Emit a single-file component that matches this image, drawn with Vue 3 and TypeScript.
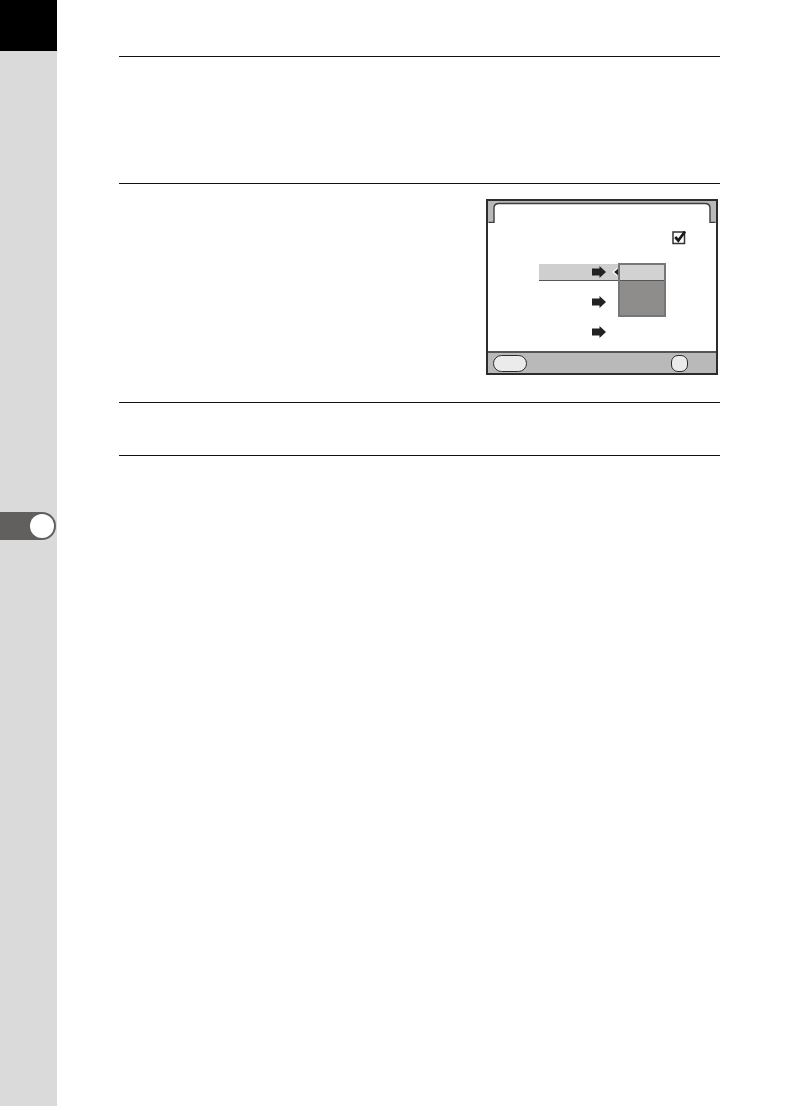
<script setup lang="ts">
const rows = [
  { id: 1, active: true },
  { id: 2, active: false },
  { id: 3, active: false },
];
</script>

<template>
  <div class="page">
    <aside class="rail">
      <div class="rail-top"></div>
      <div class="rail-tab"><span class="rail-dot"></span></div>
    </aside>
    <main class="content">
      <section class="block block-a"></section>
      <section class="block block-b">
        <div class="screen">
          <svg class="screen-head" width="228" height="22" viewBox="0 0 228 22" aria-hidden="true">
            <path d="M0 0H228V21.500H222V7Q222 3 217 2.500H11Q6 3 6 7V21.500H0Z" fill="#b9b9b9" />
            <path d="M0.500 21.500H6V7Q6 2.500 11 2.500H217Q222 2.500 222 7V21.500H227.500" fill="none" stroke="#3c3c3c" stroke-width="1.400" />
          </svg>
          <div class="check-row">
            <svg width="15" height="15" viewBox="0 0 15 15" aria-hidden="true">
              <rect x="1" y="2" width="11.500" height="11.500" fill="#fff" stroke="#333" stroke-width="1.500" />
              <path d="M3.200 7L6.300 10.500L13 1.500" fill="none" stroke="#1a1a1a" stroke-width="2.700" />
            </svg>
          </div>
          <div class="rows">
            <div v-for="row in rows" :key="row.id" class="row" :class="{ 'row-active': row.active }">
              <svg class="arrow" width="14" height="12" viewBox="0 0 14 12" aria-hidden="true">
                <path d="M0 2.500H7.500V0L14 6L7.500 12V9.500H0Z" fill="#222" />
              </svg>
              <span v-if="row.active" class="caret"></span>
            </div>
          </div>
          <div class="dropdown">
            <div class="dropdown-item"></div>
          </div>
          <footer class="screen-foot">
            <span class="key key-wide"></span>
            <span class="key key-round"></span>
          </footer>
        </div>
      </section>
      <section class="block block-c"></section>
    </main>
  </div>
</template>

<style scoped>
.page {
  display: flex;
  width: 795px;
  height: 1106px;
  overflow: hidden;
  background: #fff;
}
.rail {
  width: 57px;
  flex: none;
  background: #dadada;
}
.rail-top {
  height: 51px;
  background: #000;
}
.rail-tab {
  display: flex;
  align-items: center;
  justify-content: flex-end;
  box-sizing: border-box;
  width: 56px;
  height: 28px;
  margin-top: 461px;
  padding-right: 2px;
  background: #625f5f;
  border-radius: 0 14px 14px 0;
}
.rail-dot {
  width: 24px;
  height: 24px;
  border-radius: 50%;
  background: #fff;
}
.content {
  width: 601px;
  margin-left: 62px;
  padding-top: 56px;
}
.block {
  border-top: 1px solid #111;
}
.block-a {
  height: 126px;
}
.block-b {
  height: 203px;
  padding-top: 15px;
}
.block-c {
  height: 52px;
  border-bottom: 1px solid #111;
}
.screen {
  position: relative;
  display: flex;
  flex-direction: column;
  box-sizing: border-box;
  width: 232px;
  height: 176px;
  margin-left: 367px;
  border: 2px solid #2c2c2c;
  background: #fff;
}
.screen-head {
  display: block;
  flex: none;
}
.check-row {
  display: flex;
  justify-content: flex-end;
  height: 15px;
  margin-top: 7px;
  padding-right: 29px;
}
.rows {
  display: flex;
  flex-direction: column;
  gap: 12.500px;
  width: 80px;
  margin: 19px 0 0 51px;
}
.row {
  display: flex;
  align-items: center;
  justify-content: flex-end;
  height: 17px;
  padding-right: 13px;
}
.row-active {
  position: relative;
  box-sizing: border-box;
  background: #cfcfcf;
  border-bottom: 1px solid #555;
}
.caret {
  position: absolute;
  right: 0;
  top: 4px;
  width: 0;
  height: 0;
  border-style: solid;
  border-width: 4px 5px 4px 0;
  border-color: transparent #222 transparent transparent;
  filter: drop-shadow(-2px 0 0 #fff);
}
.dropdown {
  position: absolute;
  left: 130px;
  top: 62px;
  box-sizing: border-box;
  width: 48px;
  height: 54px;
  border: 2px solid #777;
  background: #8f8c8c;
}
.dropdown-item {
  height: 15px;
  background: #d2d2d2;
  border-bottom: 1px solid #555;
}
.screen-foot {
  display: flex;
  align-items: center;
  justify-content: space-between;
  box-sizing: border-box;
  height: 22px;
  margin-top: auto;
  padding: 0 28px 0 5px;
  background: #b9b9b9;
  border-top: 2px solid #555;
}
.key {
  display: block;
  box-sizing: border-box;
  height: 17px;
  border: 1.500px solid #2c2c2c;
  background: #ebebeb;
}
.key-wide {
  width: 34px;
  border-radius: 9px;
}
.key-round {
  width: 17px;
  border-radius: 7px;
}
</style>
